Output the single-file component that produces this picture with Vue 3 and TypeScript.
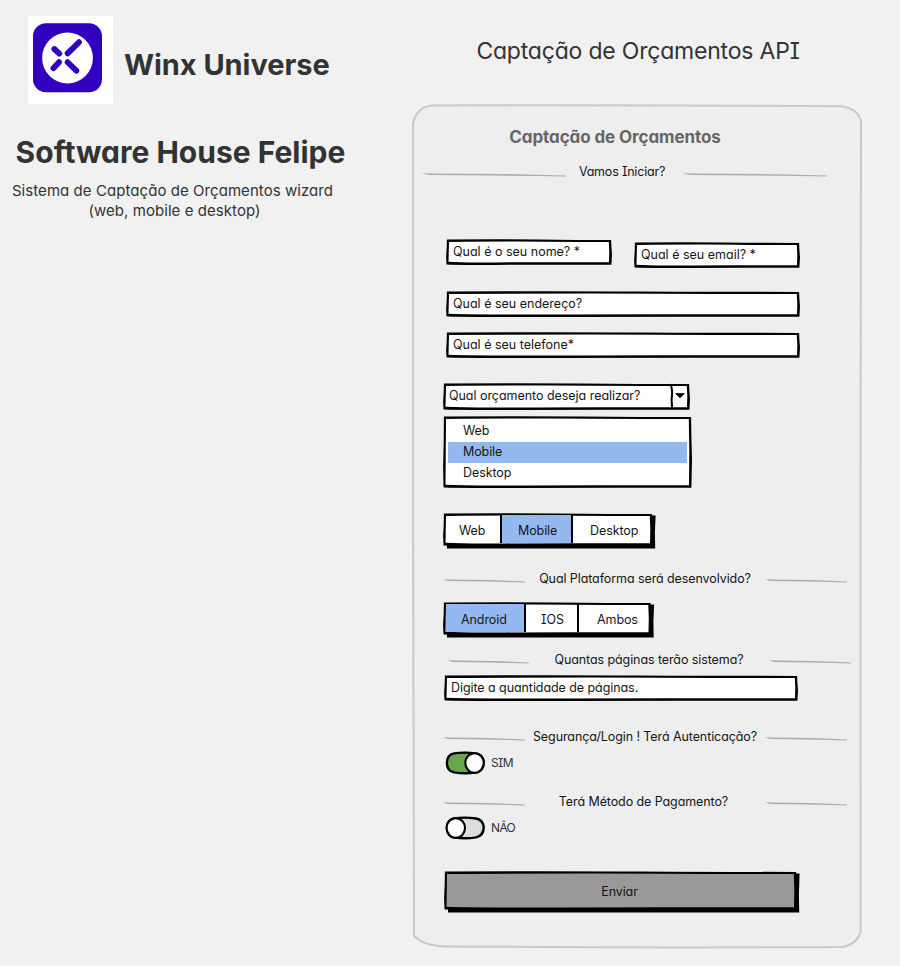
<script setup lang="ts">
import { h, ref } from 'vue'

interface FrameProps {
  w: number
  h: number
  fill?: string
  shadow?: boolean
}

const fields = {
  name: 'Qual é o seu nome? *',
  email: 'Qual é seu email? *',
  address: 'Qual é seu endereço?',
  phone: 'Qual é seu telefone*',
  pages: 'Digite a quantidade de páginas.',
}
const captions = {
  start: 'Vamos Iniciar?',
  platform: 'Qual Plataforma será desenvolvido?',
  pages: 'Quantas páginas terão sistema?',
  login: 'Segurança/Login ! Terá Autenticação?',
  payment: 'Terá Método de Pagamento?',
}
const budgets = ['Web', 'Mobile', 'Desktop']
const platforms = ['Android', 'IOS', 'Ambos']
const selectedBudget = ref('Mobile')
const selectedPlatform = ref('Android')
const login = ref(true)
const payment = ref(false)

// Rectangle with slightly uneven edges, drawn behind a control.
const Frame = (props: FrameProps) => {
  const { w, h: t, fill = '#fff', shadow = false } = props
  const outer = `M.9 .4Q${w * 0.3} -.1 ${w * 0.55} .4T${w - 0.9} .9L${w - 0.6} ${t * 0.3}L${w} ${t * 0.6}L${w - 0.6} ${t - 0.2}Q${w * 0.6} ${t - 0.4} ${w * 0.3} ${t - 0.1}T.5 ${t - 0.7}L.1 ${t * 0.7}L.7 ${t * 0.35}Z`
  const inner = `M3 2.9Q${w * 0.4} 2.3 ${w * 0.6} 2.7T${w - 3.2} 3.1L${w - 2.7} ${t * 0.5}L${w - 3} ${t - 2.7}Q${w * 0.5} ${t - 3} ${w * 0.3} ${t - 2.6}T2.5 ${t - 3.2}Z`
  return h('svg', { class: 'frame', viewBox: `0 0 ${w} ${t}`, width: w, height: t }, [
    shadow ? h('path', { d: `M4 3L${w + 2.6} 2.4L${w + 1.9} ${t * 0.6}L${w + 2.2} ${t + 2.4}H4Z` }) : null,
    h('path', { d: outer }),
    h('path', { d: inner, fill }),
  ])
}
Frame.props = { w: Number, h: Number, fill: String, shadow: Boolean }

// Tapered pencil stroke on either side of a section caption.
const Stroke = (props: { w: number }) => {
  const { w } = props
  return h('svg', { class: 'stroke', viewBox: `0 0 ${w} 4`, width: w, height: 4 }, [
    h('path', {
      d: `M0 .2L${w * 0.1} .6L${w * 0.55} .9L${w * 0.8} 1.7L${w} 2.5L${w - 0.5} 3.4L${w * 0.8} 3L${w * 0.5} 2.5L${w * 0.06} 1.9Z`,
      fill: '#acacac',
    }),
  ])
}
Stroke.props = { w: Number }

const Toggle = (props: { on: boolean }) =>
  h('svg', { viewBox: '0 0 40 24', width: 40, height: 24 }, [
    h('path', {
      d: 'M9 2.4Q20 .8 31 2.5Q37.5 3.5 38.7 10.5Q39 19.6 31 21.4Q20 23.2 9 21.4Q1.8 19.6 1.9 12Q2 4 9 2.4Z',
      fill: props.on ? '#68a74d' : '#ddd',
      stroke: '#000',
      'stroke-width': 2.4,
    }),
    h('ellipse', {
      cx: props.on ? 29.5 : 10.8,
      cy: 12,
      rx: 9.2,
      ry: 9.8,
      fill: '#fff',
      stroke: '#000',
      'stroke-width': 2.1,
    }),
  ])
Toggle.props = { on: Boolean }
</script>

<template>
  <div class="page">
    <aside class="intro">
      <div class="brand">
        <div class="logo">
          <svg viewBox="0 0 85 88" width="85" height="88">
            <rect x="5" y="7.3" width="69" height="69" rx="13" fill="#3200bf" />
            <circle cx="39.5" cy="42" r="25.4" fill="#fff" />
            <path
              d="M26.3 33L31.3 37.6M51 26.2L39.6 37.4M31 46.2L25.4 52.2M39.6 46.2L48.4 54.8"
              stroke="#3200bf"
              stroke-width="5.8"
              stroke-linecap="round"
            />
          </svg>
        </div>
        <h2 class="brand-name">Winx Universe</h2>
      </div>
      <h1 class="house">Software House Felipe</h1>
      <p class="summary">
        Sistema de Captação de Orçamentos wizard<br /><span class="summary-note">(web, mobile e desktop)</span>
      </p>
    </aside>

    <main class="main">
      <h2 class="api-title">Captação de Orçamentos API</h2>

      <form class="card" @submit.prevent>
        <svg class="card-outline" viewBox="0 0 450 844" width="450" height="844">
          <path
            d="M20 1.4Q220 .6 429 2.3Q445 4 449 17L448.5 400L448.6 829Q443 842 429 843Q220 844 33 842.4Q12 842 2 832L1 400V20Q4 3 20 1.4Z"
            fill="#eee"
            stroke="#c9c9c9"
            stroke-width="2"
          />
        </svg>

        <h3 class="card-title">Captação de Orçamentos</h3>

        <div class="rule rule-start"><Stroke :w="145" /><span>{{ captions.start }}</span><Stroke :w="145" /></div>

        <div class="pair">
          <label class="field field-name"><Frame :w="166" :h="26" /><span>{{ fields.name }}</span></label>
          <label class="field field-email"><Frame :w="166" :h="26" /><span>{{ fields.email }}</span></label>
        </div>
        <label class="field field-address"><Frame :w="354" :h="26" /><span>{{ fields.address }}</span></label>
        <label class="field field-phone"><Frame :w="354" :h="26" /><span>{{ fields.phone }}</span></label>

        <div class="combo">
          <Frame :w="247" :h="27" />
          <span>Qual orçamento deseja realizar?</span>
          <svg class="arrow" viewBox="0 0 20 27" width="20" height="27">
            <path d="M2 1L3.2 9L2.6 17L3.2 26" fill="none" stroke="#000" stroke-width="2" />
            <path d="M6.7 10.6H15.3L11 14.8Z" stroke="#000" stroke-width=".8" stroke-linejoin="round" />
          </svg>
        </div>

        <div class="list">
          <Frame :w="249" :h="72" />
          <ul class="options">
            <li v-for="b in budgets" :key="b" :class="{ selected: b === selectedBudget }" @click="selectedBudget = b">
              {{ b }}
            </li>
          </ul>
        </div>

        <div class="segments segments-budget">
          <Frame :w="210" :h="33" shadow />
          <button
            v-for="b in budgets"
            :key="b"
            type="button"
            class="segment"
            :class="{ selected: b === selectedBudget }"
            @click="selectedBudget = b"
          >
            {{ b }}
          </button>
        </div>

        <div class="rule rule-platform"><Stroke :w="82" /><span>{{ captions.platform }}</span><Stroke :w="82" /></div>

        <div class="segments segments-platform">
          <Frame :w="208.5" :h="33" shadow />
          <button
            v-for="p in platforms"
            :key="p"
            type="button"
            class="segment"
            :class="{ selected: p === selectedPlatform }"
            @click="selectedPlatform = p"
          >
            {{ p }}
          </button>
        </div>

        <div class="rule rule-pages"><Stroke :w="82" /><span>{{ captions.pages }}</span><Stroke :w="82" /></div>
        <label class="field field-pages"><Frame :w="354" :h="26" /><span>{{ fields.pages }}</span></label>

        <div class="rule rule-login"><Stroke :w="82" /><span>{{ captions.login }}</span><Stroke :w="82" /></div>
        <div class="switch switch-login" @click="login = !login"><Toggle :on="login" /><span>SIM</span></div>

        <div class="rule rule-payment"><Stroke :w="82" /><span>{{ captions.payment }}</span><Stroke :w="82" /></div>
        <div class="switch switch-payment" @click="payment = !payment"><Toggle :on="payment" /><span>NÂO</span></div>

        <button type="submit" class="send">
          <Frame :w="353" :h="39" fill="#999" shadow />
          <span>Enviar</span>
        </button>
      </form>
    </main>
  </div>
</template>

<style>
body {
  margin: 0;
  background: #f1f1f1;
}
</style>

<style scoped>
.page {
  display: grid;
  grid-template-columns: 412px 1fr;
  width: 900px;
  height: 966px;
  overflow: hidden;
  background: #f1f1f1;
  color: #151515;
  font-family: Inter, 'Liberation Sans', sans-serif;
  font-size: 12.5px;
  line-height: 20px;
  letter-spacing: -0.09px;
  font-feature-settings: 'cv11', 'cv08';
}
h1,
h2,
h3,
p,
ul {
  margin: 0;
  padding: 0;
}
h1,
h2,
p {
  color: #333;
}
.brand {
  display: flex;
  align-items: flex-start;
  gap: 11px;
  padding: 16px 0 0 28px;
}
.logo {
  width: 85px;
  height: 88px;
  background: #fff;
}
.brand-name {
  margin-top: 29px;
  font-size: 29px;
  line-height: 40px;
  font-weight: 650;
  letter-spacing: -0.05px;
}
.house {
  width: 361px;
  margin-top: 28px;
  font-size: 30px;
  line-height: 40px;
  font-weight: 650;
  text-align: center;
  letter-spacing: 0;
}
.summary {
  width: 345px;
  margin-top: 9px;
  font-size: 15px;
  line-height: 19.5px;
  letter-spacing: 0.06px;
  text-align: center;
}
.summary-note {
  padding-left: 4px;
}
.main {
  display: flex;
  flex-direction: column;
}
.api-title {
  width: 452px;
  margin-top: 36px;
  font-size: 23px;
  line-height: 30px;
  font-weight: 400;
  letter-spacing: -0.2px;
  text-align: center;
}
.card {
  position: relative;
  display: flex;
  flex-direction: column;
  align-items: flex-start;
  width: 450px;
  height: 844px;
  margin-top: 38px;
}
.card > * {
  flex: none;
}
.card-outline,
.frame {
  position: absolute;
  top: 0;
  left: 0;
  z-index: 0;
  overflow: visible;
}
.card-title {
  position: relative;
  width: 406px;
  margin-top: 21px;
  color: #666;
  font-size: 17px;
  line-height: 24px;
  font-weight: 650;
  letter-spacing: -0.09px;
  text-align: center;
}
.rule {
  position: relative;
  display: flex;
  align-items: center;
  justify-content: space-between;
  width: 404px;
  height: 20px;
  margin-left: 31px;
  white-space: nowrap;
}
.rule span {
  padding-top: 2px;
}
.stroke {
  flex: none;
  margin-top: 5px;
}
.rule-start {
  width: 406px;
  margin: 13px 0 0 9px;
}
.rule-start span {
  margin-right: 4px;
  padding-top: 0;
  letter-spacing: -0.2px;
}
.rule-platform {
  margin-top: 22px;
}
.rule-pages {
  margin: 14px 0 0 35px;
}
.rule-login {
  margin-top: 25px;
}
.rule-payment {
  margin-top: 16.5px;
}
.rule-payment span {
  margin-right: 3px;
  padding-top: 0;
}
.field,
.combo {
  position: relative;
  display: block;
  width: 354px;
  height: 26px;
  padding: 3px 0 0 7px;
  box-sizing: border-box;
  letter-spacing: 0;
  white-space: nowrap;
}
.field span,
.combo span {
  position: relative;
}
.pair {
  display: flex;
  gap: 22px;
  margin: 57px 0 0 34px;
}
.field-name,
.field-email {
  width: 166px;
}
.field-email {
  margin-top: 3px;
}
.field-address {
  margin: 23px 0 0 34px;
}
.field-phone {
  margin: 15px 0 0 34px;
}
.field-pages {
  margin: 6px 0 0 32px;
  letter-spacing: -0.07px;
}
.combo {
  display: flex;
  justify-content: space-between;
  width: 247px;
  height: 27px;
  margin: 25px 0 0 31px;
  padding: 0 1px 0 6px;
  letter-spacing: -0.04px;
}
.combo span {
  margin-top: 3px;
}
.arrow {
  position: relative;
}
.list {
  position: relative;
  width: 249px;
  height: 72px;
  margin: 6px 0 0 31px;
}
.options {
  position: relative;
  padding: 5px 5px 0;
  list-style: none;
}
.options li {
  height: 21px;
  padding-left: 15px;
  line-height: 20px;
}
.options .selected,
.segment.selected {
  background: #94b9f1;
}
.segments {
  position: relative;
  display: flex;
  margin-left: 31px;
  height: 33px;
  box-sizing: border-box;
  padding: 2px 2px 2px 3px;
}
.segments-budget {
  width: 210px;
  margin-top: 25px;
}
.segments-platform {
  width: 209px;
  margin-top: 14px;
}
.segment {
  position: relative;
  height: 28px;
  padding: 4px 0 0;
  border: 0;
  border-left: 2px solid #000;
  background: none;
  color: inherit;
  font: inherit;
  font-feature-settings: inherit;
  letter-spacing: inherit;
  text-align: left;
}
.segment:nth-of-type(1) {
  border-left: 0;
}
.segments-budget .segment:nth-of-type(1) {
  width: 54px;
  padding-left: 13px;
}
.segments-budget .segment:nth-of-type(2) {
  width: 71px;
  padding-left: 16px;
}
.segments-budget .segment:nth-of-type(3) {
  width: 80px;
  padding-left: 17px;
}
.segments-platform .segment:nth-of-type(1) {
  width: 78px;
  padding-left: 15px;
}
.segments-platform .segment:nth-of-type(2) {
  width: 53px;
  padding-left: 15px;
}
.segments-platform .segment:nth-of-type(3) {
  width: 73px;
  padding-left: 18px;
}
.switch {
  position: relative;
  display: flex;
  gap: 6px;
  margin-left: 33px;
  height: 24px;
  color: #333;
  font-size: 12px;
  letter-spacing: -0.65px;
}
.switch-login {
  margin-top: 5px;
}
.switch-payment {
  margin-top: 4px;
}
.switch span {
  margin-top: 2px;
}
.send {
  position: relative;
  width: 353px;
  height: 40px;
  margin: 31.5px 0 0 32px;
  padding: 2px 2px 0 0;
  border: 0;
  background: none;
  color: #151515;
  font: inherit;
  font-feature-settings: inherit;
  letter-spacing: inherit;
}
.send span {
  position: relative;
}
</style>
